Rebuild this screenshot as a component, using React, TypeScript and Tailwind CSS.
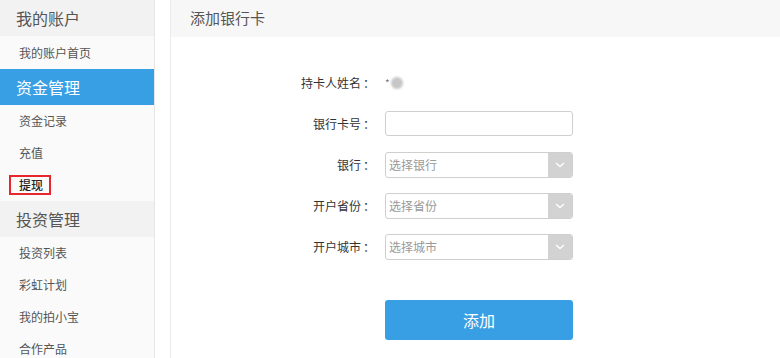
import { FC } from "react";

type INavGroup = {
  title: string;
  active?: boolean;
  items: { label: string; current?: boolean }[];
};

const groups: INavGroup[] = [
  { title: "我的账户", items: [{ label: "我的账户首页" }] },
  {
    title: "资金管理",
    active: true,
    items: [{ label: "资金记录" }, { label: "充值" }, { label: "提现", current: true }],
  },
  {
    title: "投资管理",
    items: [
      { label: "投资列表" },
      { label: "彩虹计划" },
      { label: "我的拍小宝" },
      { label: "合作产品" },
    ],
  },
];

const Sidebar: FC = () => (
  <div className="w-[155px] shrink-0 bg-[#fafafa] border-r border-[#e6e6e6] h-full">
    {groups.map((group) => (
      <div key={group.title}>
        <div
          className={`h-[36px] pl-[16px] flex items-center text-[16px] ${
            group.active ? "bg-[#399fe5] text-white" : "bg-[#f2f2f2] text-[#555]"
          }`}
        >
          {group.title}
        </div>
        {group.items.map((item, i) => (
          <div
            key={item.label}
            className={`flex items-center text-[12px] text-[#555] ${
              i === 0 && group.title === "我的账户" ? "h-[33px]" : "h-[32px]"
            }`}
          >
            {item.current ? (
              <span className="ml-[9px] pl-[8px] pr-[6px] h-[20px] flex items-center border-2 border-[#e8262d] text-[#222] font-medium">
                {item.label}
              </span>
            ) : (
              <span className="ml-[19px]">{item.label}</span>
            )}
          </div>
        ))}
      </div>
    ))}
  </div>
);

const Label: FC<{ text: string }> = ({ text }) => (
  <div className="w-[204px] shrink-0 text-right text-[12px] text-[#333]">
    {text}<span className="ml-[2px]">：</span>
  </div>
);

const SelectBox: FC<{ placeholder: string }> = ({ placeholder }) => (
  <div className="w-[188px] h-[26px] border border-[#cfcfcf] rounded-[3px] flex items-stretch overflow-hidden">
    <div className="flex-1 flex items-center pl-[3px] text-[12px] text-[#999]">
      {placeholder}
    </div>
    <div className="w-[24px] bg-[#d2d2d2] flex items-center justify-center">
      <svg width="10" height="6" viewBox="0 0 10 6" fill="none">
        <path d="M1 1l4 3.5L9 1" stroke="#fff" strokeWidth="1.4" />
      </svg>
    </div>
  </div>
);

const App: FC = () => {
  return (
    <div
      className="w-[780px] h-[358px] overflow-hidden bg-white flex"
      style={{ fontFamily: '"Noto Sans CJK SC", "Noto Sans", sans-serif' }}
    >
      <Sidebar />
      <div className="w-[15px] shrink-0" />
      <div className="flex-1 border-l border-[#ebebeb] h-full">
        <div className="h-[37px] bg-[#f7f7f7] pl-[19px] flex items-center text-[15px] text-[#555]">
          添加银行卡
        </div>
        <div className="pt-[33px] flex flex-col gap-[16px]">
          <div className="h-[25px] flex items-center gap-[10px]">
            <Label text="持卡人姓名" />
            <div className="flex items-center">
              <span className="text-[10px] text-[#777] leading-none">*</span>
              <span className="w-[12px] h-[12px] rounded-full bg-[#c6c6c6] blur-[1px] ml-[1px]" />
            </div>
          </div>
          <div className="h-[25px] flex items-center gap-[10px]">
            <Label text="银行卡号" />
            <div className="w-[188px] h-[25px] border border-[#cfcfcf] rounded-[3px]" />
          </div>
          <div className="h-[25px] flex items-center gap-[10px]">
            <Label text="银行" />
            <SelectBox placeholder="选择银行" />
          </div>
          <div className="h-[25px] flex items-center gap-[10px]">
            <Label text="开户省份" />
            <SelectBox placeholder="选择省份" />
          </div>
          <div className="h-[25px] flex items-center gap-[10px]">
            <Label text="开户城市" />
            <SelectBox placeholder="选择城市" />
          </div>
          <div className="flex gap-[10px] mt-[25px]">
            <div className="w-[204px] shrink-0" />
            <button className="w-[188px] h-[40px] bg-[#399fe5] rounded-[3px] text-white text-[16px]">
              添加
            </button>
          </div>
        </div>
      </div>
    </div>
  );
};

export default App;
